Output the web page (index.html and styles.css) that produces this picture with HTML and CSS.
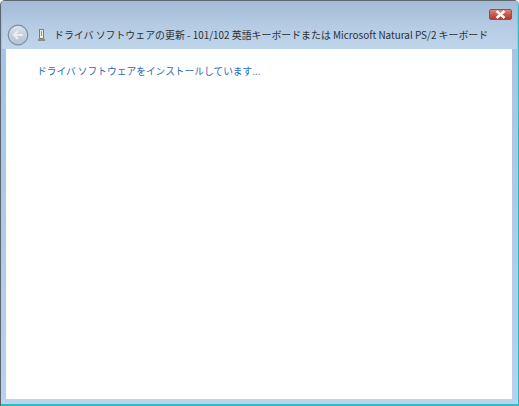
FILE: index.html
```html
<!DOCTYPE html>
<html lang="ja">
<head>
<meta charset="utf-8">
<title>ドライバ ソフトウェアの更新</title>
<link rel="stylesheet" href="styles.css">
</head>
<body>
<div class="window">
  <div class="chrome">
    <div class="caption">
      <div class="close">
        <svg width="11" height="9" viewBox="0 0 11 9"><path d="M1.5 1 L9.5 8 M9.5 1 L1.5 8" stroke="#fff" stroke-width="2.4" fill="none"/></svg>
      </div>
    </div>
    <div class="toolbar">
      <div class="back">
        <svg width="22" height="22" viewBox="0 0 22 22">
          <defs>
            <linearGradient id="bk" x1="0" y1="0" x2="0" y2="1"><stop offset="0" stop-color="#dfe6ee"/><stop offset="0.5" stop-color="#c3cfdc"/><stop offset="1" stop-color="#b4c2d2"/></linearGradient>
          </defs>
          <circle cx="11" cy="11" r="9.8" fill="url(#bk)" stroke="#7e8c9c" stroke-width="1.2"/>
          <path d="M16 11 H7.5 M11 7 L7 11 L11 15" stroke="#e9eef4" stroke-width="2.2" fill="none"/>
        </svg>
      </div>
      <svg class="device" width="9" height="14" viewBox="0 0 9 14">
        <rect x="2.5" y="1.5" width="4" height="9" fill="#eeeee2" stroke="#7d7d70" stroke-width="1"/>
        <rect x="4" y="3" width="1" height="5" fill="#58b858"/>
        <rect x="1" y="11" width="7" height="2" fill="#8e8e84"/>
      </svg>
      <div class="title">ドライバ ソフトウェアの更新 - 101/102 英語キーボードまたは Microsoft Natural PS/2 キーボード</div>
    </div>
  </div>
  <div class="main">
    <p class="status">ドライバ ソフトウェアをインストールしています...</p>
  </div>
  <div class="edge"></div>
</div>
</body>
</html>
```
FILE: styles.css
```css
html, body {
  margin: 0;
  padding: 0;
  background: #fff;
}
body {
  width: 519px;
  height: 406px;
  overflow: hidden;
  font-family: "Noto Sans CJK JP", "Liberation Sans", sans-serif;
}
.window {
  box-sizing: border-box;
  width: 519px;
  height: 406px;
  display: flex;
  flex-direction: column;
  padding: 0 1px 0 1px;
  border-left: 1px solid #5c6670;
  border-top: 1px solid #5f6872;
  border-right: 1px solid #2fbcc6;
  border-radius: 5px 5px 0 0;
  background: linear-gradient(180deg, #9db9d8 0, #a9c4e2 12%, #b9d1ea 100%);
}
.chrome {
  height: 48px;
  flex: none;
  display: flex;
  flex-direction: column;
  background: linear-gradient(180deg, #a3bbd6 0, #b4cbe3 50%, #c0d5ea 100%);
}
.caption {
  height: 19px;
  display: flex;
  justify-content: flex-end;
  padding-right: 5px;
}
.close {
  box-sizing: border-box;
  width: 23px;
  height: 11px;
  margin-top: 8px;
  display: flex;
  align-items: center;
  justify-content: center;
  background: linear-gradient(180deg, #d98a78 0, #c9574a 50%, #b33a2e 100%);
  border: 1px solid #87554f;
  border-radius: 2px;
}
.toolbar {
  flex: 1;
  display: flex;
  align-items: flex-start;
  padding-left: 5px;
}
.back {
  width: 22px;
  height: 22px;
  flex: none;
  margin-top: 4px;
}
.device {
  flex: none;
  margin: 8px 0 0 8px;
}
.title {
  margin: 6px 0 0 8px;
  font-size: 9.92px;
  line-height: 17px;
  color: #2a2f35;
  white-space: nowrap;
}
.main {
  flex: 1;
  margin: 0 5px 0 4px;
  background: #fff;
  padding: 14px 0 0 31px;
}
.status {
  margin: 0;
  font-size: 9.72px;
  line-height: 17px;
  color: #2a6ab8;
  white-space: nowrap;
}
.edge {
  height: 5px;
  flex: none;
  margin: 0 -1px;
  background: #bcd3ec;
  border-bottom: 2px solid #2fbcc6;
}
```
